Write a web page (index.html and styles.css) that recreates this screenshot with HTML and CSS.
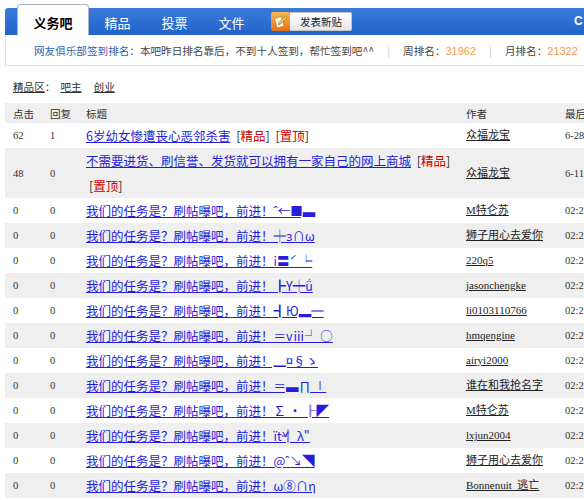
FILE: index.html
```html
<!DOCTYPE html>
<html lang="zh-CN">
<head>
    <meta charset="UTF-8">
    <title>义务吧</title>
    <link rel="stylesheet" href="styles.css">
</head>
<body>
<div class="page">
    <div class="nav">
        <a class="tab active" href="#">义务吧</a>
        <a class="tab" href="#">精品</a>
        <a class="tab" href="#">投票</a>
        <a class="tab" href="#">文件</a>
        <a class="post-btn" href="#">
            <span class="post-icon">
                <svg width="19" height="19" viewBox="0 0 19 19">
                    <defs>
                        <linearGradient id="og" x1="0" y1="0" x2="0" y2="1">
                            <stop offset="0" stop-color="#fbb84c"/>
                            <stop offset="1" stop-color="#e5701a"/>
                        </linearGradient>
                    </defs>
                    <rect width="19" height="19" rx="2" fill="url(#og)"/>
                    <path d="M3.5 6.5 L10.5 4.5 L13 14 L6 16 Z" fill="#fffaf0" stroke="#c8691c" stroke-width="0.6"/>
                    <path d="M14.6 3.6 L16.2 5.2 L9.4 12 L7.2 12.8 L8 10.6 Z" fill="#f6d55e" stroke="#7d5514" stroke-width="0.6"/>
                </svg>
            </span>
            <span class="post-text">发表新贴</span>
        </a>
        <span class="nav-extra">C</span>
    </div>

    <div class="sign-bar">
        <a class="sign-link" href="#">网友俱乐部签到排名</a>：本吧昨日排名靠后，不到十人签到，帮忙签到吧^^<span class="sep">|</span>周排名：<span class="rank">31962</span><span class="sep">|</span>月排名：<span class="rank">21322</span>
    </div>

    <div class="good-area">
        <a href="#">精品区</a>：<a class="cat" href="#">吧主</a><a class="cat cat-2" href="#">创业</a>
    </div>

    <table class="thread-list">
        <colgroup>
            <col class="c-click"><col class="c-reply"><col class="c-title"><col class="c-author"><col class="c-last">
        </colgroup>
        <thead>
            <tr><th>点击</th><th>回复</th><th>标题</th><th>作者</th><th>最后</th></tr>
        </thead>
        <tbody>
            <tr>
                <td class="num">62</td><td class="num">1</td>
                <td class="title"><a href="#">6岁幼女惨遭丧心恶邻杀害</a> <span class="tag">[<em>精品</em>]</span> <span class="tag">[<em>置顶</em>]</span></td>
                <td class="author"><a href="#">众福龙宝</a></td><td class="num">6-28</td>
            </tr>
            <tr>
                <td class="num">48</td><td class="num">0</td>
                <td class="title"><a href="#">不需要进货、刷信誉、发货就可以拥有一家自己的网上商城</a> <span class="tag">[<em>精品</em>]</span> <span class="tag">[<em>置顶</em>]</span></td>
                <td class="author"><a href="#">众福龙宝</a></td><td class="num">6-11</td>
            </tr>
            <tr>
                <td class="num">0</td><td class="num">0</td>
                <td class="title"><a href="#">我们的任务是？刷帖曝吧，前进！ˆ←■▃</a></td>
                <td class="author"><a href="#">M特仑苏</a></td><td class="num">02:21</td>
            </tr>
            <tr>
                <td class="num">0</td><td class="num">0</td>
                <td class="title"><a href="#">我们的任务是？刷帖曝吧，前进！╪з∩ω</a></td>
                <td class="author"><a href="#">狮子用心去爱你</a></td><td class="num">02:21</td>
            </tr>
            <tr>
                <td class="num">0</td><td class="num">0</td>
                <td class="title"><a href="#">我们的任务是？刷帖曝吧，前进！i〓ˊ ╘</a></td>
                <td class="author"><a href="#">220q5</a></td><td class="num">02:21</td>
            </tr>
            <tr>
                <td class="num">0</td><td class="num">0</td>
                <td class="title"><a href="#">我们的任务是？刷帖曝吧，前进！┣Y┿ǘ</a></td>
                <td class="author"><a href="#">jasonchengke</a></td><td class="num">02:21</td>
            </tr>
            <tr>
                <td class="num">0</td><td class="num">0</td>
                <td class="title"><a href="#">我们的任务是？刷帖曝吧，前进！┫Ю▂═</a></td>
                <td class="author"><a href="#">li0103110766</a></td><td class="num">02:21</td>
            </tr>
            <tr>
                <td class="num">0</td><td class="num">0</td>
                <td class="title"><a href="#">我们的任务是？刷帖曝吧，前进！＝vⅲ┘ ○</a></td>
                <td class="author"><a href="#">hmqengine</a></td><td class="num">02:21</td>
            </tr>
            <tr>
                <td class="num">0</td><td class="num">0</td>
                <td class="title"><a href="#">我们的任务是？刷帖曝吧，前进！▁¤§ゝ</a></td>
                <td class="author"><a href="#">airyi2000</a></td><td class="num">02:21</td>
            </tr>
            <tr>
                <td class="num">0</td><td class="num">0</td>
                <td class="title"><a href="#">我们的任务是？刷帖曝吧，前进！＝▃∏ ∣</a></td>
                <td class="author"><a href="#">谁在和我抢名字</a></td><td class="num">02:21</td>
            </tr>
            <tr>
                <td class="num">0</td><td class="num">0</td>
                <td class="title"><a href="#">我们的任务是？刷帖曝吧，前进！∑ · ╟◤</a></td>
                <td class="author"><a href="#">M特仑苏</a></td><td class="num">02:21</td>
            </tr>
            <tr>
                <td class="num">0</td><td class="num">0</td>
                <td class="title"><a href="#">我们的任务是？刷帖曝吧，前进！ïť╣ λ"</a></td>
                <td class="author"><a href="#">lxjun2004</a></td><td class="num">02:21</td>
            </tr>
            <tr>
                <td class="num">0</td><td class="num">0</td>
                <td class="title"><a href="#">我们的任务是？刷帖曝吧，前进！@ˆ↘◥</a></td>
                <td class="author"><a href="#">狮子用心去爱你</a></td><td class="num">02:21</td>
            </tr>
            <tr>
                <td class="num">0</td><td class="num">0</td>
                <td class="title"><a href="#">我们的任务是？刷帖曝吧，前进！ω⑧∩η</a></td>
                <td class="author"><a href="#">Bonnenuit_逃亡</a></td><td class="num">02:21</td>
            </tr>
        </tbody>
    </table>
</div>
</body>
</html>
```

FILE: styles.css
```css
html, body { overflow: hidden; }
body { margin: 0; background: #fff; color: #333; font-family: "Noto Sans CJK SC", sans-serif; font-size: 10.6px; }
a { color: inherit; }
.page { width: 700px; padding-left: 5px; }

.nav { display: flex; align-items: flex-start; height: 27px; margin-top: 8px; background: linear-gradient(#3a7bd9, #2263ca); border-radius: 3px 3px 0 0; }
.tab { width: 57px; height: 27px; padding-top: 3px; box-sizing: border-box; line-height: 24px; text-align: center; color: #fff; font-size: 13px; text-decoration: none; }
.tab.active { width: 72px; height: 31px; margin: -4px 0 0 12px; padding-top: 6px; background: #fff; color: #000; font-weight: bold; border: 1px solid #a9b3c2; border-bottom: none; border-radius: 4px 4px 0 0; }
.post-btn { display: flex; height: 19px; margin: 4px 0 0 11px; text-decoration: none; color: #222; }
.post-icon svg { display: block; }
.post-text { padding: 0 9px 0 10px; line-height: 17px; font-size: 10.5px; border: 1px solid #c6c6c6; border-left: none; border-radius: 0 2px 2px 0; background: linear-gradient(#ffffff, #e6e6e6); }
.nav-extra { margin-left: 222px; color: #fff; font: bold 12px "Liberation Sans", sans-serif; line-height: 27px; }

.sign-bar { padding: 8px 0 6px 28px; line-height: 16px; border-left: 1px solid #e0e0e0; border-bottom: 1px solid #e0e0e0; white-space: nowrap; color: #444; }
.sign-link { color: #2f5fae; text-decoration: none; }
.sep { margin: 0 13px; color: #ccc; }
.rank { color: #ef9c56; font-family: "Liberation Sans", sans-serif; font-size: 11px; }

.good-area { height: 37px; box-sizing: border-box; padding: 13px 0 0 8px; line-height: 16px; }
.good-area a { color: #333; }
.good-area .cat { margin-left: 5px; }
.good-area .cat-2 { margin-left: 12px; }

.thread-list { width: 695px; table-layout: fixed; border-collapse: collapse; }
.c-click { width: 37px; }
.c-reply { width: 36px; }
.c-title { width: 380px; }
.c-author { width: 99px; }
.c-last { width: 143px; }
.thread-list th { height: 20px; padding: 0 0 0 8px; text-align: left; font-weight: normal; color: #333; background: #efefef; white-space: nowrap; }
.thread-list td { padding: 0 0 0 8px; line-height: 25px; vertical-align: middle; white-space: nowrap; overflow: hidden; }
.thread-list tbody tr:nth-child(even) { background: #efefef; }
.thread-list .num { font-family: "Liberation Serif", "Noto Sans CJK SC", serif; font-size: 10.6px; color: #333; }
.thread-list .title { font-size: 12.5px; white-space: normal; padding-right: 6px; }
.title a { color: #261cdc; }
.tag { margin-left: 3px; color: #333; }
.tag em { font-style: normal; color: #c00; }
.author { font-family: "Liberation Serif", "Noto Sans CJK SC", serif; font-size: 11px; }
.author a { color: #222; }
```
